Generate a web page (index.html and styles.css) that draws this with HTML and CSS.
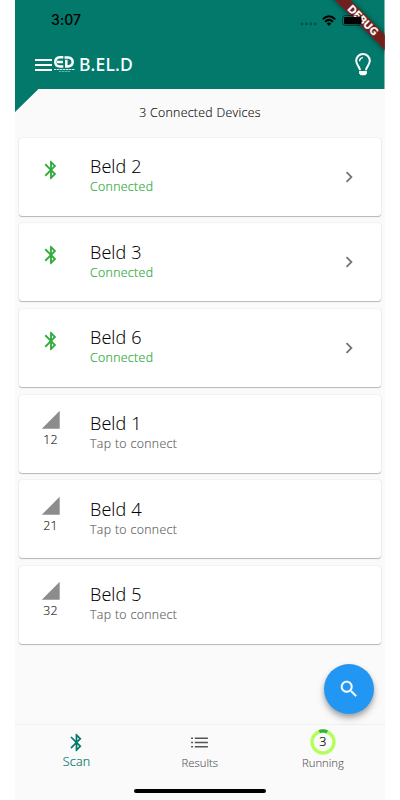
FILE: index.html
```html
<!DOCTYPE html>
<html lang="en">
<head>
<meta charset="utf-8">
<title>B.EL.D</title>
<link rel="stylesheet" href="styles.css">
</head>
<body>
<svg class="defs" width="0" height="0" aria-hidden="true">
  <symbol id="bluetooth" viewBox="0 0 24 24"><path d="M17.71 7.71L12 2h-1v7.59L6.41 5 5 6.41 10.59 12 5 17.59 6.41 19 11 14.41V22h1l5.71-5.71-4.3-4.29 4.3-4.29zM13 5.83l1.88 1.88L13 9.59V5.83zm1.88 10.46L13 18.17v-3.76l1.88 1.88z"/></symbol>
  <symbol id="chevron" viewBox="0 0 24 24"><path d="M10 6L8.59 7.41 13.17 12l-4.58 4.59L10 18l6-6z"/></symbol>
  <symbol id="signal" viewBox="0 0 24 24"><path d="M2 22h20V2z"/></symbol>
</svg>
<div class="screen">
  <header class="header">
    <div class="status">
      <span class="time">3:07</span>
      <svg class="cell" viewBox="0 0 17 4"><circle cx="2" cy="2" r="1.4"/><circle cx="6.4" cy="2" r="1.4"/><circle cx="10.8" cy="2" r="1.4"/><circle cx="15.2" cy="2" r="1.4"/></svg>
      <svg class="wifi" viewBox="0 0 14 11"><path d="M.8 4.200Q7-1.600 13.200 4.200M3.100 6.700Q7 3 10.900 6.700" fill="none" stroke="#000" stroke-width="2"/><path d="M4.700 8.600Q7 6.500 9.300 8.600L7 10.900z"/></svg>
    </div>
    <div class="toolbar">
      <svg class="menu" viewBox="0 0 17 12"><path d="M0 1h17M0 6h17M0 11h17" stroke="#fff" stroke-width="2"/></svg>
      <span class="logo">
        <svg viewBox="0 0 20 12"><g fill="none" stroke="#fff" stroke-width="2.5"><path d="M9.300 1.300H6Q1.300 1.700 1.300 6T6 10.600H9.300M3 6H9"/><path d="M12.300 3.800V10.400H14Q18.700 10 18.700 6T14 1.500H10.500"/></g></svg>
        <span class="logo-line"></span>
        <span class="logo-line short"></span>
      </span>
      <span class="title">B.EL.D</span>
      <svg class="bulb" viewBox="0 0 16 23"><path d="M5 17.2C4.8 13.8 1.2 12 1.2 7.8A6.8 6.8 0 0 1 14.8 7.8C14.8 12 11.2 13.8 11 17.2" fill="none" stroke="#fff" stroke-width="2"/><path d="M4.6 8.2Q4.7 5 8 4.6" fill="none" stroke="#fff" stroke-width="1.4"/><path d="M4.1 18h7.800v2.200L10.4 22.200H5.600L4.100 20.200z" fill="#fff"/></svg>
    </div>
  </header>
  <div class="debug"><span>DEBUG</span></div>
  <svg class="battery" viewBox="0 0 24 11"><path d="M16 .5H3.100Q.5.5.5 3.100V7.900Q.5 10.500 3.100 10.500H18" fill="none" stroke="#000" stroke-opacity=".45"/><rect x="2" y="2" width="17.500" height="7.200" rx="1"/></svg>

  <main class="devices">
    <h1 class="count">3 Connected Devices</h1>
    <article class="card on"><div class="lead"><svg class="bt"><use href="#bluetooth"/></svg></div><div class="info"><h2>Beld 2</h2><p>Connected</p></div><svg class="chev"><use href="#chevron"/></svg></article>
    <article class="card on"><div class="lead"><svg class="bt"><use href="#bluetooth"/></svg></div><div class="info"><h2>Beld 3</h2><p>Connected</p></div><svg class="chev"><use href="#chevron"/></svg></article>
    <article class="card on"><div class="lead"><svg class="bt"><use href="#bluetooth"/></svg></div><div class="info"><h2>Beld 6</h2><p>Connected</p></div><svg class="chev"><use href="#chevron"/></svg></article>
    <article class="card"><div class="lead"><svg class="sig"><use href="#signal"/></svg><span>12</span></div><div class="info"><h2>Beld 1</h2><p>Tap to connect</p></div></article>
    <article class="card"><div class="lead"><svg class="sig"><use href="#signal"/></svg><span>21</span></div><div class="info"><h2>Beld 4</h2><p>Tap to connect</p></div></article>
    <article class="card"><div class="lead"><svg class="sig"><use href="#signal"/></svg><span>32</span></div><div class="info"><h2>Beld 5</h2><p>Tap to connect</p></div></article>
  </main>

  <div class="fab"><svg viewBox="0 0 24 24"><path d="M15.5 14h-.79l-.28-.27A6.471 6.471 0 0 0 16 9.500 6.500 6.500 0 1 0 9.500 16c1.610 0 3.090-.59 4.230-1.570l.27.28v.79l5 4.990L20.490 19l-4.990-5zm-6 0C7.010 14 5 11.990 5 9.500S7.010 5 9.500 5 14 7.010 14 9.500 11.990 14 9.500 14z"/></svg></div>

  <nav class="tabs">
    <div class="tab active"><svg class="tab-icon"><use href="#bluetooth"/></svg><span>Scan</span></div>
    <div class="tab"><svg class="tab-icon list" viewBox="0 0 20 20"><path d="M2 6h1.800M2 10h1.800M2 14h1.800M5.500 6h12.500M5.500 10h12.500M5.500 14h12.500" fill="none" stroke="#555" stroke-width="1.400"/></svg><span>Results</span></div>
    <div class="tab"><div class="ring"><svg viewBox="0 0 26 26"><circle cx="13" cy="13" r="11" fill="none" stroke="#b2ff59" stroke-width="3.300"/><path d="M9.300 2.640A11 11 0 0 1 17.300 2.870" fill="none" stroke="#35b044" stroke-width="3.300"/></svg><b>3</b></div><span>Running</span></div>
  </nav>
  <div class="home"></div>
</div>
</body>
</html>
```
FILE: styles.css
```css
* { box-sizing: border-box; }
body { margin: 0; background: #fff; font-family: "Open Sans", "Noto Sans", sans-serif; font-weight: 300; }
h1, h2, p { margin: 0; font-weight: 300; }
svg { display: block; flex: none; }
.defs { position: absolute; }

.screen { position: relative; width: 369.5px; height: 800px; margin-left: 15px; background: #fafafa; overflow: hidden; display: flex; flex-direction: column; }

.header { flex: none; height: 112px; margin-bottom: -23px; background: #02796b; clip-path: polygon(0 0, 100% 0, 100% 89px, 23.5px 89px, 0 112px); }
.status { display: flex; align-items: center; height: 40px; padding-left: 36px; }
.time { width: 249px; font: 500 14px/20px Inter, sans-serif; letter-spacing: .1px; color: #000; }
.cell { width: 17px; height: 4px; margin-top: 7px; fill: #000; opacity: .3; }
.wifi { width: 14px; height: 11px; margin-left: 5px; }
.battery { position: absolute; left: 327px; top: 14.500px; width: 24px; height: 11px; }

.toolbar { display: flex; align-items: center; height: 48px; padding: 0 14px 0 20px; }
.menu { width: 17px; height: 12px; margin-top: 1px; }
.logo { width: 22px; margin-left: 1px; display: flex; flex-direction: column; align-items: center; }
.logo svg { width: 20px; height: 12px; }
.logo-line { width: 21px; height: 1px; margin-top: 1px; background: repeating-linear-gradient(90deg, #d5e9e6 0 2px, #67aaa1 2px 3px); }
.logo-line.short { width: 11px; opacity: .5; }
.title { flex: 1; margin-left: 4px; font: 500 17.500px/24px "Noto Sans", sans-serif; letter-spacing: .2px; color: #fff; }
.bulb { width: 16px; height: 23px; }

.debug { position: absolute; left: 297.500px; top: 15px; width: 100px; height: 11px; transform: rotate(45deg); background: rgba(136, 14, 14, .83); box-shadow: 0 0 5px rgba(0, 0, 0, .5); color: #fff; font: 900 10.300px/11px Lato, sans-serif; text-align: center; letter-spacing: .5px; }
.debug span { -webkit-text-stroke: .3px #fff; }

.devices { flex: 1; padding: 0 3.500px 0 4px; }
.count { height: 48.500px; font-size: 12.300px; line-height: 47px; letter-spacing: .3px; text-align: center; color: #111; -webkit-text-stroke: .15px; }
.card { display: flex; height: 78px; margin-bottom: 7.700px; background: #fff; border-radius: 3px; box-shadow: 0 1px 1px rgba(0, 0, 0, .25), 0 0 1.500px rgba(0, 0, 0, .14); }
.lead { width: 63px; padding-top: 17px; display: flex; flex-direction: column; align-items: center; font-size: 12.300px; line-height: 17px; letter-spacing: .3px; color: #222; -webkit-text-stroke: .15px; }
.bt { width: 22px; height: 22px; margin-top: 4px; fill: #2fac3a; }
.sig { width: 21.500px; height: 21.500px; margin-top: -2.500px; margin-bottom: .5px; fill: #8c8c8c; }
.info { flex: 1; padding: 16.400px 0 0 8px; }
.info h2 { font-size: 18px; line-height: 24px; letter-spacing: .1px; color: #000; -webkit-text-stroke: .1px; }
.info p { font-size: 12.300px; line-height: 17px; letter-spacing: .35px; color: #606060; -webkit-text-stroke: .15px; }
.on .info p { color: #2fac3a; -webkit-text-stroke: .2px; }
.chev { width: 22px; height: 22px; margin: 28px 21px 0 0; fill: #757575; }

.fab { position: absolute; left: 309px; top: 664px; width: 50px; height: 50px; border-radius: 50%; background: #2196f3; box-shadow: 0 3px 5px rgba(0, 0, 0, .26), 0 5px 9px rgba(0, 0, 0, .15); display: flex; align-items: center; justify-content: center; }
.fab svg { width: 22px; height: 22px; fill: #fff; stroke: #fff; stroke-width: .2; }

.tabs { flex: none; height: 76px; border-top: 1px solid #f0f0f0; display: flex; }
.tab { flex: 1; display: flex; flex-direction: column; align-items: center; font-size: 11.300px; line-height: 16px; color: #555; -webkit-text-stroke: .1px; }
.tab-icon { width: 21px; height: 21px; margin: 6.500px 0 1.500px; }
.tab-icon.list { margin: 6.500px 0 2.500px; }
.tab.active { font-size: 12.500px; letter-spacing: .2px; color: #02796b; fill: #02796b; -webkit-text-stroke: .2px; }
.ring { position: relative; width: 26px; height: 26px; margin: 4px 0 0; }
.ring svg { width: 26px; height: 26px; }
.ring b { position: absolute; inset: 0; font-weight: 300; font-size: 12.500px; line-height: 26px; text-align: center; color: #000; -webkit-text-stroke: .2px; }
.home { position: absolute; left: 119px; top: 788.500px; width: 132px; height: 4px; border-radius: 2px; background: #000; }
```
